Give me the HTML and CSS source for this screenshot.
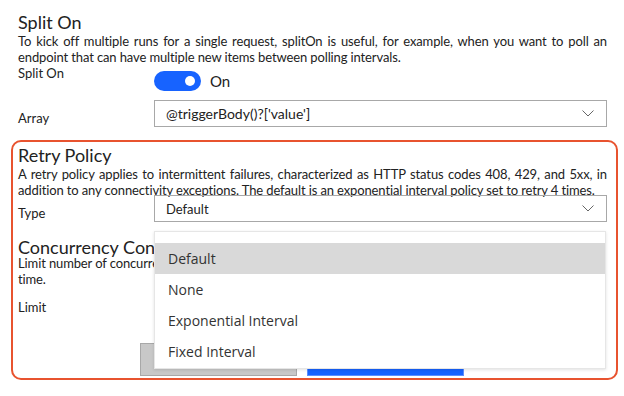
FILE: index.html
```html
<!DOCTYPE html>
<html lang="en">

<head>
  <meta charset="UTF-8">
  <meta name="viewport" content="width=device-width, initial-scale=1.0">
  <title>Action Settings</title>
  <link rel="stylesheet" href="styles.css">
</head>

<body>
  <div class="page">
    <!-- Split On -->
    <section class="section">
      <h2>Split On</h2>
      <p class="desc">To kick off multiple runs for a single request, splitOn is useful, for example, when you want to poll an endpoint that can have multiple new items between polling intervals.</p>

      <div class="row row-top">
        <label class="label">Split On</label>
        <div class="control toggle-wrap">
          <span class="toggle"><span class="knob"></span></span>
          <span class="toggle-text">On</span>
        </div>
      </div>

      <div class="row">
        <label class="label">Array</label>
        <div class="control">
          <div class="select select-lg">
            <span>@triggerBody()?['value']</span>
            <svg class="chevron" width="12" height="7" viewBox="0 0 12 7"><path d="M0.5 0.5 L6 6 L11.5 0.5" fill="none" stroke="#666" stroke-width="1"/></svg>
          </div>
        </div>
      </div>
    </section>

    <!-- Retry Policy (highlighted) -->
    <section class="section highlight">
      <h2>Retry Policy</h2>
      <p class="desc">A retry policy applies to intermittent failures, characterized as HTTP status codes 408, 429, and 5xx, in addition to any connectivity exceptions. The default is an exponential interval policy set to retry 4 times.</p>

      <div class="row">
        <label class="label">Type</label>
        <div class="control dropdown-host">
          <div class="select">
            <span>Default</span>
            <svg class="chevron" width="12" height="7" viewBox="0 0 12 7"><path d="M0.5 0.5 L6 6 L11.5 0.5" fill="none" stroke="#666" stroke-width="1"/></svg>
          </div>
          <ul class="menu">
            <li class="selected">Default</li>
            <li>None</li>
            <li>Exponential Interval</li>
            <li>Fixed Interval</li>
          </ul>
        </div>
      </div>

      <h2 class="sub">Concurrency Control</h2>
      <p class="desc">Limit number of concurrent runs of the flow, or leave it off to run as many as possible at the same<br>time.</p>

      <div class="row row-top">
        <label class="label limit">Limit</label>
      </div>

      <div class="buttons">
        <button class="btn btn-cancel">Cancel</button>
        <button class="btn btn-done">Done</button>
      </div>
    </section>
  </div>
</body>

</html>
```

FILE: styles.css
```css
body {
  margin: 0;
  font-family: Lato, "Liberation Sans", sans-serif;
  color: #222;
  background-color: #fff;
}

.page {
  padding-top: 11px;
}

.section {
  padding: 0 17px 0 18px;
}

h2 {
  margin: 0;
  font-size: 18px;
  font-weight: 400;
  line-height: 23px;
}

.desc {
  margin: 0;
  font-size: 13px;
  line-height: 15.5px;
  letter-spacing: -0.12px;
  text-align: justify;
}

.row {
  display: flex;
  align-items: flex-end;
}

.row-top {
  align-items: flex-start;
}

.label {
  width: 136px;
  font-size: 13px;
  padding-bottom: 1px;
}

.control {
  flex: 1;
}

.toggle-wrap {
  display: flex;
  align-items: center;
  margin-top: 6px;
  gap: 9px;
}

.toggle {
  display: flex;
  align-items: center;
  justify-content: flex-end;
  width: 47px;
  height: 20px;
  box-sizing: border-box;
  padding-right: 6px;
  border-radius: 10px;
  background-color: #1763ff;
}

.knob {
  width: 10px;
  height: 10px;
  border-radius: 50%;
  background-color: #fff;
}

.toggle-text {
  font-size: 15px;
}

.select {
  display: flex;
  align-items: center;
  justify-content: space-between;
  height: 27px;
  box-sizing: border-box;
  margin-top: 9px;
  padding: 0 12px 0 11px;
  border: 1px solid #a8a8a8;
  font-size: 13px;
}

.select-lg {
  font-size: 14px;
}

.highlight {
  margin: 13px 6px 0 11px;
  padding: 2px 9px 0 5px;
  border: 2px solid #e8532f;
  border-radius: 10px;
}

.highlight .select {
  margin-top: -3px;
}

.dropdown-host {
  position: relative;
}

.menu {
  position: absolute;
  top: 33px;
  left: 0;
  right: 1px;
  margin: 0;
  padding: 11px 0 1px;
  list-style: none;
  background-color: #fff;
  border: 1px solid #e6e6e6;
  box-shadow: 0 1px 3px rgba(0, 0, 0, 0.12);
  z-index: 2;
}

.menu li {
  height: 31px;
  line-height: 31px;
  padding-left: 13px;
  font-family: "Open Sans", sans-serif;
  font-size: 14px;
  color: #333;
}

.menu li.selected {
  background-color: #d9d9d9;
}

.sub {
  margin: 14px 0 -2px;
  line-height: 22px;
}

.limit {
  margin-top: 12px;
}

.buttons {
  display: flex;
  gap: 10px;
  margin: 27px 0 2px 122px;
}

.btn {
  width: 157px;
  height: 33px;
  border: 1px solid #a8a8a8;
  font-family: inherit;
  font-size: 13px;
}

.btn-cancel {
  background-color: #c8c8c8;
}

.btn-done {
  background-color: #1763ff;
  border-color: #5b8fff;
  color: #fff;
}
```
